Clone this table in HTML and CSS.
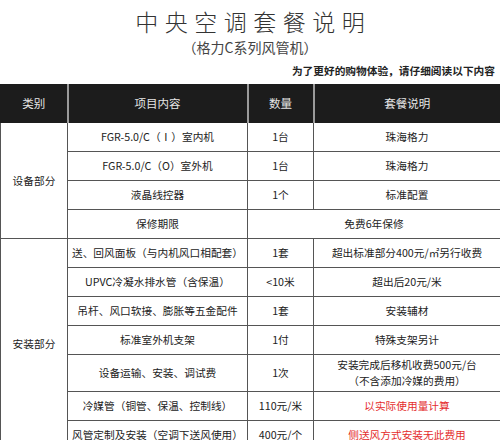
FILE: index.html
```html
<!DOCTYPE html>
<html lang="zh-CN">
<head>
<meta charset="utf-8">
<title>中央空调套餐说明</title>
<link rel="stylesheet" href="styles.css">
</head>
<body>
<div class="page">
  <header class="intro">
    <h1 class="title">中央空调套餐说明</h1>
    <p class="subtitle">（格力C系列风管机）</p>
    <p class="note">为了更好的购物体验，请仔细阅读以下内容</p>
  </header>
  <table class="plan">
    <colgroup>
      <col class="c1"><col class="c2"><col class="c3"><col class="c4">
    </colgroup>
    <thead>
      <tr class="head">
        <th>类别</th><th>项目内容</th><th>数量</th><th>套餐说明</th>
      </tr>
    </thead>
    <tbody>
      <tr>
        <td rowspan="4" class="cat">设备部分</td>
        <td>FGR-5.0/C（Ⅰ）室内机</td><td>1台</td><td>珠海格力</td>
      </tr>
      <tr><td>FGR-5.0/C（O）室外机</td><td>1台</td><td>珠海格力</td></tr>
      <tr><td>液晶线控器</td><td>1个</td><td>标准配置</td></tr>
      <tr><td>保修期限</td><td colspan="2">免费6年保修</td></tr>
      <tr>
        <td rowspan="7" class="cat">安装部分</td>
        <td>送、回风面板（与内机风口相配套）</td><td>1套</td><td>超出标准部分400元/㎡另行收费</td>
      </tr>
      <tr><td>UPVC冷凝水排水管（含保温）</td><td>&lt;10米</td><td>超出后20元/米</td></tr>
      <tr><td>吊杆、风口软接、膨胀等五金配件</td><td>1套</td><td>安装辅材</td></tr>
      <tr><td>标准室外机支架</td><td>1付</td><td>特殊支架另计</td></tr>
      <tr class="tall"><td>设备运输、安装、调试费</td><td>1次</td><td>安装完成后移机收费500元/台<br>（不含添加冷媒的费用）</td></tr>
      <tr><td>冷媒管（铜管、保温、控制线）</td><td>110元/米</td><td class="red">以实际使用量计算</td></tr>
      <tr><td>风管定制及安装（空调下送风使用）</td><td>400元/个</td><td class="red">侧送风方式安装无此费用</td></tr>
    </tbody>
  </table>
</div>
</body>
</html>
```
FILE: styles.css
```css
html, body {
  margin: 0;
  padding: 0;
  background: #ffffff;
}
body {
  font-family: "Noto Sans CJK SC", "Noto Sans", sans-serif;
  color: #222;
}
.page {
  width: 500px;
  height: 440px;
  overflow: hidden;
}
.intro {
  display: flex;
  flex-direction: column;
  align-items: center;
  padding-top: 7px;
}
.title {
  margin: 0;
  font-size: 23px;
  line-height: 28px;
  font-weight: 300;
  letter-spacing: 6.5px;
  padding-left: 6.5px;
  color: #333;
}
.subtitle {
  margin: 3px 0 0 0;
  font-size: 14px;
  line-height: 18px;
  color: #444;
}
.note {
  align-self: flex-end;
  margin: 7px 5px 0 0;
  font-size: 10.7px;
  line-height: 16px;
  font-weight: 700;
  color: #222;
}
.plan {
  margin-top: 5px;
  width: 500px;
  border-collapse: collapse;
  table-layout: fixed;
  font-size: 10.7px;
}
.c1 { width: 67px; }
.c2 { width: 180px; }
.c3 { width: 66px; }
.c4 { width: 187px; }
.plan th, .plan td {
  text-align: center;
  vertical-align: middle;
  padding: 0;
  border: 1px solid #555;
  line-height: 16px;
}
.head th {
  height: 38px;
  background: #1c1c1c;
  color: #e6e6e6;
  font-weight: 400;
  font-size: 11.5px;
  border-top: none;
  border-color: #1c1c1c;
  border-right: 2px solid #9a9a9a;
}
.head th:last-child {
  border-right: 1px solid #1c1c1c;
}
.plan tbody tr {
  height: 29px;
}
.plan tbody tr.tall {
  height: 37px;
}
.plan td.cat {
  color: #222;
}
.plan td.red {
  color: #e42c2c;
}
```
